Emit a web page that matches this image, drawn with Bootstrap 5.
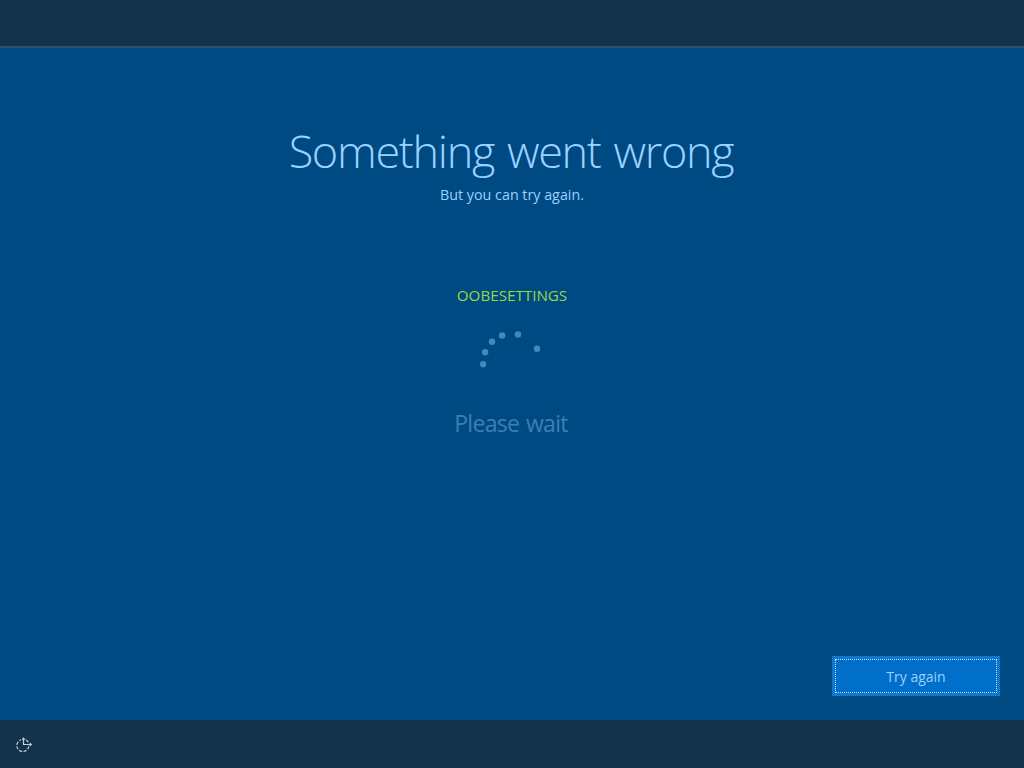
<!DOCTYPE html>
<html lang="en">
<head>
    <meta charset="UTF-8">
    <meta name="viewport" content="width=device-width, initial-scale=1.0">
    <title>Something went wrong</title>
    <link href="https://cdn.jsdelivr.net/npm/bootstrap@5.3.0/dist/css/bootstrap.min.css" rel="stylesheet">
    <style>
        body {
            background: #004a83;
            color: #99d1ff;
            font-family: "Open Sans", "Noto Sans", sans-serif;
        }
        .top-bar {
            height: 48px;
            background: #15324b;
            border-bottom: 2px solid #2f4e68;
        }
        .bottom-bar {
            height: 48px;
            background: #15324b;
            padding-left: 15px;
        }
        .oobe-title {
            margin-top: 71px;
            padding-right: 2px;
            font-size: 45px;
            font-weight: 300;
            letter-spacing: -1.3px;
            word-spacing: 2.5px;
            line-height: 64px;
        }
        .oobe-text {
            margin-top: 2px;
            font-size: 14.3px;
            line-height: 20px;
        }
        .error-code {
            margin-top: 80px;
            color: #96d943;
            font-size: 15.2px;
            line-height: 20px;
        }
        .progress-dots {
            margin-top: 21px;
            fill: #4388be;
        }
        .wait-text {
            margin-top: 20px;
            padding-right: 2px;
            color: #3d7fb2;
            font-size: 23px;
            letter-spacing: -0.7px;
            word-spacing: 1.5px;
            line-height: 34px;
        }
        .retry-btn {
            width: 168px;
            height: 40px;
            margin: 0 24px 24px 0;
            padding: 3px;
            background: repeating-conic-gradient(#006cc8 0 25%, #2583cb 0 50%) 0 0 / 2px 2px;
            color: #99d1ff;
            font-size: 14px;
        }
        .retry-btn span {
            background: #006fc9;
            border: 1px dotted #c4e6ff;
        }
    </style>
</head>
<body class="vh-100 d-flex flex-column overflow-hidden">
    <header class="top-bar flex-shrink-0"></header>

    <main class="flex-grow-1 d-flex flex-column align-items-center">
        <h1 class="oobe-title mb-0 text-nowrap">Something went wrong</h1>
        <p class="oobe-text mb-0">But you can try again.</p>
        <p class="error-code mb-0">OOBESETTINGS</p>

        <!-- Progress ring -->
        <svg class="progress-dots" width="64" height="60" viewBox="480 326 64 60">
            <circle cx="483" cy="364.2" r="3.2"/>
            <circle cx="485.1" cy="352.2" r="3.2"/>
            <circle cx="492" cy="341.8" r="3.2"/>
            <circle cx="502.1" cy="335.5" r="3.2"/>
            <circle cx="518" cy="334.4" r="3.2"/>
            <circle cx="537" cy="348.7" r="3.2"/>
        </svg>

        <p class="wait-text mb-0">Please wait</p>

        <button type="button" class="retry-btn btn border-0 rounded-0 d-flex mt-auto align-self-end">
            <span class="flex-grow-1 h-100 d-flex align-items-center justify-content-center">Try again</span>
        </button>
    </main>

    <footer class="bottom-bar flex-shrink-0 d-flex align-items-center">
        <!-- Ease of access -->
        <svg width="18" height="18" viewBox="0 0 18 18" fill="none" stroke="#b9d2e4" stroke-width="1.2">
            <path d="M13.8 11.3A6 6 0 1 1 6 4.8" stroke-dasharray="3.2 1.4"/>
            <path d="M8.5 3v6.5H16M7.2 4.7l1.3-1.5 1.3 1.5M14.8 8.2l1.5 1.3-1.5 1.3"/>
            <path d="M11 5a6 6 0 0 1 2.4 2.2"/>
        </svg>
    </footer>

    <script src="https://cdn.jsdelivr.net/npm/bootstrap@5.3.0/dist/js/bootstrap.bundle.min.js"></script>
</body>
</html>
